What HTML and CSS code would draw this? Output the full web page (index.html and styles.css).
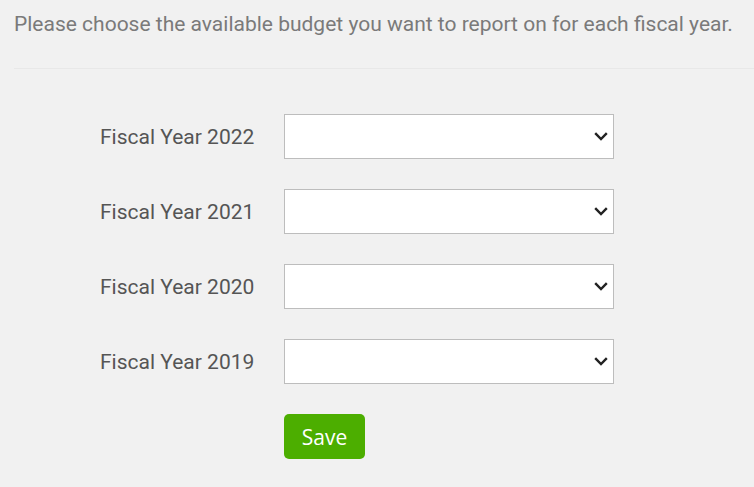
FILE: index.html
```html
<!DOCTYPE html>
<html>
<head>
<meta charset="utf-8">
<link rel="stylesheet" href="styles.css">
</head>
<body>
<div class="intro">Please choose the available budget you want to report on for each fiscal year.</div>
<form class="budget-form">
  <label class="label" for="fy2022">Fiscal Year 2022</label>
  <div class="select-wrap">
    <select id="fy2022" class="select"><option></option></select>
    <svg class="chevron" width="14" height="9" viewBox="0 0 14 9"><path d="M1.2 1.2 L7 7 L12.8 1.2" fill="none" stroke="#222" stroke-width="2.4"/></svg>
  </div>
  <label class="label" for="fy2021">Fiscal Year 2021</label>
  <div class="select-wrap">
    <select id="fy2021" class="select"><option></option></select>
    <svg class="chevron" width="14" height="9" viewBox="0 0 14 9"><path d="M1.2 1.2 L7 7 L12.8 1.2" fill="none" stroke="#222" stroke-width="2.4"/></svg>
  </div>
  <label class="label" for="fy2020">Fiscal Year 2020</label>
  <div class="select-wrap">
    <select id="fy2020" class="select"><option></option></select>
    <svg class="chevron" width="14" height="9" viewBox="0 0 14 9"><path d="M1.2 1.2 L7 7 L12.8 1.2" fill="none" stroke="#222" stroke-width="2.4"/></svg>
  </div>
  <label class="label" for="fy2019">Fiscal Year 2019</label>
  <div class="select-wrap">
    <select id="fy2019" class="select"><option></option></select>
    <svg class="chevron" width="14" height="9" viewBox="0 0 14 9"><path d="M1.2 1.2 L7 7 L12.8 1.2" fill="none" stroke="#222" stroke-width="2.4"/></svg>
  </div>
  <div></div>
  <div><button type="button" class="save">Save</button></div>
</form>
</body>
</html>
```
FILE: styles.css
```css
html, body {
  margin: 0;
  padding: 0;
  background: #f1f1f1;
}
body {
  font-family: Roboto, "Liberation Sans", sans-serif;
}
.intro {
  margin-left: 14px;
  padding: 9px 0 29px 0;
  font-size: 21px;
  line-height: 30px;
  color: #7a7a7a;
  border-bottom: 1px solid #e8e8e8;
  white-space: nowrap;
}
.budget-form {
  display: grid;
  grid-template-columns: 154px 330px;
  column-gap: 30px;
  row-gap: 30px;
  padding: 45px 0 0 100px;
}
.label {
  display: flex;
  align-items: center;
  font-size: 21px;
  color: #555;
  height: 45px;
  white-space: nowrap;
}
.select-wrap {
  position: relative;
  height: 45px;
}
.select {
  appearance: none;
  -webkit-appearance: none;
  box-sizing: border-box;
  width: 330px;
  height: 45px;
  margin: 0;
  border: 1px solid #bdbdbd;
  border-radius: 0;
  background: #fff;
  font-family: Roboto, sans-serif;
  font-size: 16px;
}
.chevron {
  position: absolute;
  right: 6px;
  top: 18px;
  pointer-events: none;
}
.save {
  box-sizing: border-box;
  width: 81px;
  height: 45px;
  border: none;
  border-radius: 5px;
  background: #4cae00;
  color: #fff;
  font-family: "Open Sans", sans-serif;
  font-size: 21px;
  padding: 0;
}
```
